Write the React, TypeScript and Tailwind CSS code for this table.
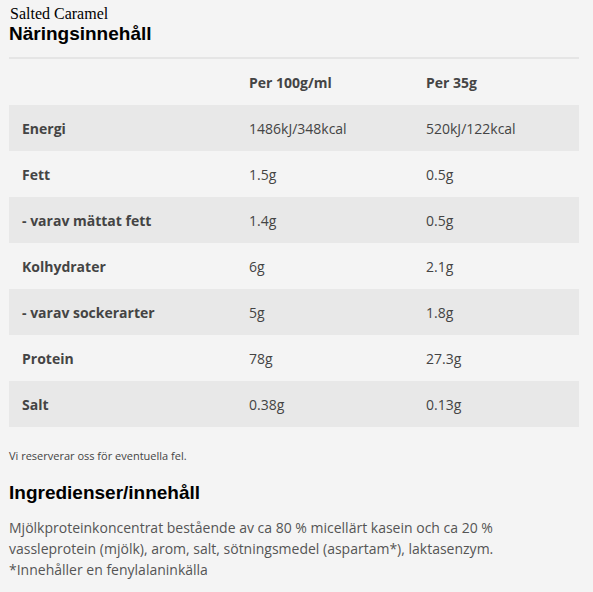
import React from "react";

const rows: [string, string, string][] = [
  ["Energi", "1486kJ/348kcal", "520kJ/122kcal"],
  ["Fett", "1.5g", "0.5g"],
  ["- varav mättat fett", "1.4g", "0.5g"],
  ["Kolhydrater", "6g", "2.1g"],
  ["- varav sockerarter", "5g", "1.8g"],
  ["Protein", "78g", "27.3g"],
  ["Salt", "0.38g", "0.13g"],
];

export default function App() {
  return (
    <div className="min-h-[592px] w-[593px] bg-[#f4f4f4] px-[9px] pt-[5px] pb-4">
      <div className="text-[16px] leading-[18px] text-black" style={{ fontFamily: '"Liberation Serif", serif' }}>
        <div className="ml-[1px]">Salted Caramel</div>
      </div>
      <h2 className="text-[19px] leading-[22px] font-bold text-black" style={{ fontFamily: '"Liberation Sans", Arial, sans-serif' }}>
        Näringsinnehåll
      </h2>
      <div className="mt-[12px] w-[570px] border-t-2 border-[#e5e5e5]" style={{ fontFamily: '"Open Sans", sans-serif' }}>
        <div className="grid h-[46px] grid-cols-[227px_177px_166px] items-center text-[14px] font-bold text-[#444]">
          <div className="pl-[13px]"></div>
          <div className="pl-[13px]">Per 100g/ml</div>
          <div className="pl-[13px]">Per 35g</div>
        </div>
        {rows.map((r, i) => (
          <div
            key={r[0]}
            className={`grid h-[46px] grid-cols-[227px_177px_166px] items-center text-[14px] text-[#444] ${i % 2 === 0 ? "bg-[#e8e8e8]" : "bg-[#f4f4f4]"}`}
          >
            <div className="pl-[13px] font-bold">{r[0]}</div>
            <div className="pl-[13px]">{r[1]}</div>
            <div className="pl-[13px]">{r[2]}</div>
          </div>
        ))}
      </div>
      <p className="mt-[21px] text-[11px] leading-[16px] text-[#444]" style={{ fontFamily: '"Open Sans", sans-serif' }}>
        Vi reserverar oss för eventuella fel.
      </p>
      <h2 className="mt-[18px] text-[19px] leading-[22px] font-bold text-black" style={{ fontFamily: '"Liberation Sans", Arial, sans-serif' }}>
        Ingredienser/innehåll
      </h2>
      <p className="mt-[13px] w-[500px] text-[14px] leading-[21px] text-[#555]" style={{ fontFamily: '"Open Sans", sans-serif' }}>
        Mjölkproteinkoncentrat bestående av ca 80 % micellärt kasein och ca 20 % vassleprotein (mjölk), arom, salt, sötningsmedel (aspartam*), laktasenzym.
        <br />
        *Innehåller en fenylalaninkälla
      </p>
    </div>
  );
}
